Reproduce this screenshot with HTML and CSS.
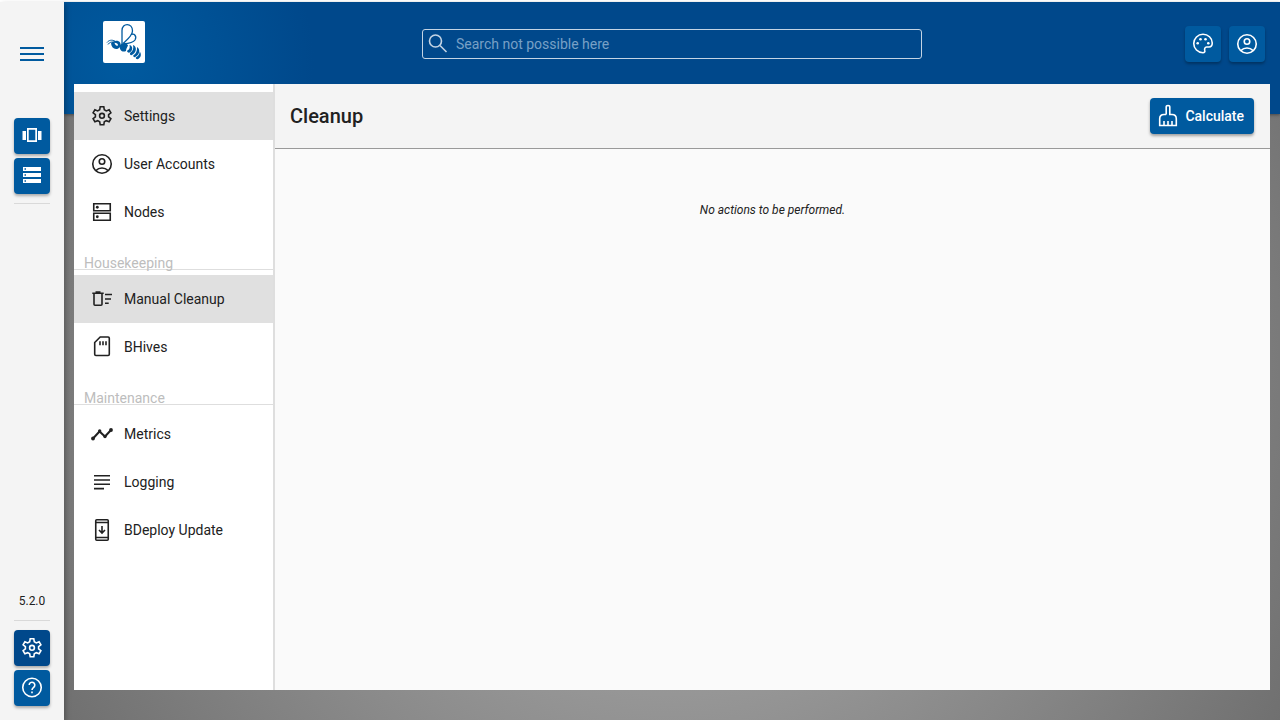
FILE: index.html
```html
<!DOCTYPE html>
<html lang="en">
<head>
<meta charset="utf-8">
<meta name="viewport" content="width=device-width, initial-scale=1">
<title>Cleanup</title>
<link rel="stylesheet" href="styles.css">
</head>
<body>
<svg class="sprite" aria-hidden="true">
  <symbol id="gear" viewBox="0 0 24 24"><path d="M10.200 2.800h3.600l.5 3 2 1.150 2.800-1.150 1.800 3.100-2.300 1.850v2.100l2.300 1.850-1.800 3.100-2.800-1.150-2 1.150-.5 3h-3.600l-.5-3-2-1.150-2.800 1.150-1.800-3.100 2.300-1.850v-2.100l-2.300-1.850 1.800-3.100 2.800 1.150 2-1.150z"/><circle cx="12" cy="11.800" r="2.400"/></symbol>
  <symbol id="account" viewBox="0 0 24 24"><circle cx="12" cy="12" r="9.250"/><circle cx="12" cy="9.500" r="2.750"/><path d="M5.800 18.600Q8.500 16 12 16t6.200 2.600"/></symbol>
</svg>
<div class="app">
  <aside class="rail" aria-label="Main menu">
    <button class="menu" type="button" aria-label="Open menu"><svg class="icon wide" viewBox="0 0 24 24"><path d="M0 6h24M0 12h24M0 18h24"/></svg></button>
    <div class="rail-group">
      <button class="icon-button" type="button" aria-label="Instance groups"><svg class="icon solid" viewBox="0 0 24 24"><path d="M2.500 7h3.500v9H2.500zM18 7h3.500v9H18zM7 4v14h10V4zm1.700 1.700h6.600v10.600H8.700z" fill-rule="evenodd"/></svg></button>
      <button class="icon-button" type="button" aria-label="Software repositories"><svg class="icon solid" viewBox="0 0 24 24"><path d="M3 3h18v4H3zm1.500 1.300v1.400H6V4.300zM3 9h18v4H3zm1.500 1.300v1.400H6v-1.400zM3 15h18v4H3zm1.500 1.300v1.400H6v-1.400z" fill-rule="evenodd"/></svg></button>
      <hr>
    </div>
    <div class="rail-group bottom">
      <span class="version">5.2.0</span>
      <hr>
      <button class="icon-button active" type="button" aria-label="Administration"><svg class="icon"><use href="#gear"/></svg></button>
      <button class="icon-button" type="button" aria-label="Help"><svg class="icon" viewBox="0 0 24 24"><circle cx="12" cy="11.500" r="9.250"/><path d="M9.200 9a2.800 2.800 0 1 1 4.700 2.100C12.700 12.200 12 12.700 12 14M12 15.500v1.700"/></svg></button>
    </div>
  </aside>
  <div class="workspace">
    <header class="banner">
      <a class="logo" href="#" aria-label="Home"><svg viewBox="0 0 42 42">
        <path class="line" d="M19 23.500V9.500C19 1.500 29.500 1.500 29.500 10 29.500 14.500 25 18 20 22.500M27.500 14c4-2.500 6.500 1.500 4.500 5-1.700 2.800-6 3.500-11.500 3.800"/>
        <path class="line thin" d="M4 21.500c2-2.500 5-3 8-1.300M5 23.500c1.500-2.500 4-3 6-2"/>
        <path d="M8 22.500c2-3.300 7.500-3.800 9.200-.8 1.300 2.800-.8 6.300-4.200 6.300-2.700 0-4.500-2.300-5-5.500z"/>
        <path d="M16.500 24.500c3-3.500 7.500-2.500 8.500 0-.8 1.500-1.800 3-2 5.500-3.500 1.800-6.500-.5-6.500-5.500zM26.500 24c4 1 3.500 6.500-.7 7.800-1.600-.3-2-1.300-1.500-2.200 2-.8 3-2.800 2.200-5.600zM30 24c4.500 1.800 3.600 8-1.600 10.200-1.500-.2-1.700-1.400-1.300-2.200 2.700-1.500 3.800-4.400 2.900-8zM34 26c3.800 2.500 2.600 8-2.300 10.300-1.300-.2-1.700-1.200-1.300-2 2.500-1.500 4-4.600 3.600-8.300zM36.800 30.500c2 3 1.200 6.300-2.300 7.800-1.300 0-1.800-.9-1.800-1.700 2.200-1.200 3.800-3 4.100-6.100z"/>
        <path class="eye" d="M11.500 21.800c2 0 3.800.9 3.400 2.600-1.100.8-2.800 0-3.400-2.600z"/>
      </svg></a>
      <label class="search"><svg class="icon" viewBox="0 0 24 24"><circle cx="9.500" cy="9" r="6"/><path d="m14 13.500 6.500 6.500"/></svg><input type="search" placeholder="Search not possible here" aria-label="Search" disabled></label>
      <div class="banner-actions">
        <button class="icon-button" type="button" aria-label="Theme"><svg class="icon" viewBox="0 0 24 24"><path d="M12 2.250a9.250 9.250 0 0 0 0 18.500c1.500 0 2.200-1.100 1.800-2.200-.5-1.500-.1-3.600 1.900-3.600h2.300c2.100 0 3.250-1.700 3.250-3.950C21.250 6 17 2.250 12 2.250z"/><g class="dots"><circle cx="6.700" cy="11.300" r="1.300"/><circle cx="9.500" cy="7.200" r="1.300"/><circle cx="14.500" cy="7.200" r="1.300"/><circle cx="17.300" cy="11.300" r="1.300"/></g></svg></button>
        <button class="icon-button" type="button" aria-label="Account"><svg class="icon"><use href="#account"/></svg></button>
      </div>
    </header>
    <div class="panel">
      <nav class="sidebar" aria-label="Administration">
        <a class="item selected" href="#"><svg class="icon"><use href="#gear"/></svg>Settings</a>
        <a class="item" href="#"><svg class="icon"><use href="#account"/></svg>User Accounts</a>
        <a class="item" href="#"><svg class="icon" viewBox="0 0 24 24"><path d="M3.750 3.750h16.500v7H3.750zM3.750 13.250h16.500v7H3.750z"/><g class="dots"><circle cx="7.300" cy="7.250" r="1.400"/><circle cx="7.300" cy="16.750" r="1.400"/></g></svg>Nodes</a>
        <h2 class="section">Housekeeping</h2>
        <a class="item selected" href="#"><svg class="icon" viewBox="0 0 24 24"><path d="M2.300 6.200h11.400M5.500 5h5M4 6.200v11.100q0 1 1 1h6q1 0 1-1V6.200M15 7.500h7M15 12h6M15 16.300h3.700"/></svg>Manual Cleanup</a>
        <a class="item" href="#"><svg class="icon" viewBox="0 0 24 24"><path d="M10.200 2h7.900q1.200 0 1.200 1.200v16.100q0 1.200-1.200 1.200H5.900q-1.200 0-1.200-1.200V7.500zM10 6.200v4M13 6.200v4M16 6.200v4"/></svg>BHives</a>
        <h2 class="section">Maintenance</h2>
        <a class="item" href="#"><svg class="icon bold" viewBox="0 0 24 24"><path d="m3 16.500 6.500-7 5.500 5L21 8"/><g class="dots"><circle cx="3" cy="16.500" r="1.900"/><circle cx="9.700" cy="9" r="1.700"/><circle cx="15" cy="14.500" r="1.700"/><circle cx="21" cy="8" r="1.900"/></g></svg>Metrics</a>
        <a class="item" href="#"><svg class="icon" viewBox="0 0 24 24"><path d="M4 5.700h16M4 10h16M4 14.300h16M4 18.600h10"/></svg>Logging</a>
        <a class="item" href="#"><svg class="icon" viewBox="0 0 24 24"><rect x="5.750" y="1.750" width="12.500" height="20.500" rx="1"/><path d="M6 4.500h12M6 19.500h12M12 8v7M9 12l3 3 3-3"/></svg>BDeploy Update</a>
      </nav>
      <main class="content">
        <div class="toolbar">
          <h1>Cleanup</h1>
          <button class="primary" type="button"><svg class="icon" viewBox="0 0 24 24"><path d="M10.200 10.500V3q0-1.500 1.800-1.500T13.800 3v7.500H16q4.300 0 4.300 4.300v6.700H3.700v-6.700q0-4.300 4.300-4.300h2.200M8 21v-4M12 21v-4M16 21v-4"/></svg>Calculate</button>
        </div>
        <p class="empty">No actions to be performed.</p>
      </main>
    </div>
  </div>
</div>
</body>
</html>
```
FILE: styles.css
```css
* { box-sizing: border-box; }
body {
  margin: 0;
  font: 14px/20px Roboto, sans-serif;
  color: #212121;
  background: #fff;
}
.sprite { position: absolute; width: 0; height: 0; }
.app {
  display: grid;
  grid-template-columns: 64px minmax(0, 1fr);
  min-height: 100vh;
  border-top: 2px solid #fff;
}
.icon {
  flex: none;
  width: 24px;
  height: 24px;
  fill: none;
  stroke: currentColor;
  stroke-width: 1.6;
}
.icon.solid, .dots { fill: currentColor; stroke: none; }
.icon.wide, .icon.bold { stroke-width: 2; }
button { font: inherit; border: 0; cursor: pointer; }
a { color: inherit; text-decoration: none; }

.rail {
  position: relative;
  display: flex;
  flex-direction: column;
  align-items: center;
  padding: 34px 14px 14px;
  background: #f4f4f4;
  box-shadow: 2px 2px 5px rgba(0, 0, 0, .25);
}
.menu {
  display: flex;
  padding: 6px;
  margin-bottom: 46px;
  color: #005a9f;
  background: none;
}
.rail-group { display: flex; flex-direction: column; gap: 4px; width: 100%; }
.rail-group.bottom { margin-top: auto; }
.rail hr { width: 100%; margin: 5px 0; border: 0; border-top: 1px solid #d9d9d9; }
.version { font-size: 12px; text-align: center; }
.icon-button {
  display: flex;
  align-items: center;
  justify-content: center;
  width: 36px;
  height: 36px;
  padding: 0;
  border-radius: 4px;
  color: #fff;
  background: #005a9f;
  box-shadow: 0 2px 3px rgba(0, 0, 0, .3);
}
.icon-button.active { background: #00488b; }

.workspace {
  display: flex;
  flex-direction: column;
  background: radial-gradient(circle at 50% 50%, #b8b8b8, #707070);
}
.banner {
  display: grid;
  grid-template-columns: 1fr minmax(0, 500px) 1fr;
  align-items: start;
  height: 112px;
  padding: 19px 15px 0 39px;
  background: radial-gradient(circle at 60px 60px, #005a9f, #00488b 190px);
  box-shadow: 0 1px 3px rgba(0, 0, 0, .4);
}
.logo {
  width: 42px;
  height: 42px;
  border-radius: 2px;
  background: #fff;
}
.logo svg { display: block; fill: #005a9f; }
.logo .line { fill: none; stroke: #005a9f; stroke-width: 1.3; }
.logo .thin { stroke-width: 1; }
.logo .eye { fill: #fff; }
.search {
  display: flex;
  align-items: center;
  gap: 6px;
  height: 30px;
  margin: 8px 12px 0 -12px;
  padding: 0 3px;
  border: 1px solid #c4d4e4;
  border-radius: 3px;
  color: #c4d4e4;
}
.search input {
  flex: 1;
  min-width: 0;
  padding: 0;
  border: 0;
  outline: 0;
  font: inherit;
  color: inherit;
  background: none;
}
.search input::placeholder { color: #78a0c6; opacity: 1; }
.banner-actions { display: flex; justify-content: flex-end; gap: 8px; padding-top: 5px; }

.panel {
  position: relative;
  flex: 1;
  display: grid;
  grid-template-columns: 201px minmax(0, 1fr);
  margin: -30px 10px 30px;
  background: #fafafa;
}
.sidebar {
  padding: 8px 0;
  background: #fff;
  border-right: 2px solid #dedede;
}
.item {
  display: flex;
  align-items: center;
  gap: 10px;
  height: 48px;
  padding: 0 16px;
}
.item.selected { background: #e0e0e0; }
.section {
  height: 34px;
  margin: 0 0 5px;
  padding: 17px 10px 0;
  border-bottom: 1px solid #dedede;
  font-size: 14px;
  font-weight: 400;
  color: #bdbdbd;
}
.toolbar {
  display: flex;
  align-items: center;
  justify-content: space-between;
  height: 65px;
  padding: 0 16px 0 15px;
  background: #f4f4f4;
  border-bottom: 1px solid #999;
}
.toolbar h1 { margin: 0; font-size: 20px; line-height: 32px; font-weight: 500; }
.primary {
  display: flex;
  align-items: center;
  gap: 5px;
  height: 36px;
  padding: 0 10px 0 6px;
  border-radius: 4px;
  font-weight: 500;
  color: #fff;
  background: #005a9f;
  box-shadow: 0 2px 3px rgba(0, 0, 0, .35);
}
.empty { margin: 51px 0 0; font-size: 12px; font-style: italic; text-align: center; }
```
